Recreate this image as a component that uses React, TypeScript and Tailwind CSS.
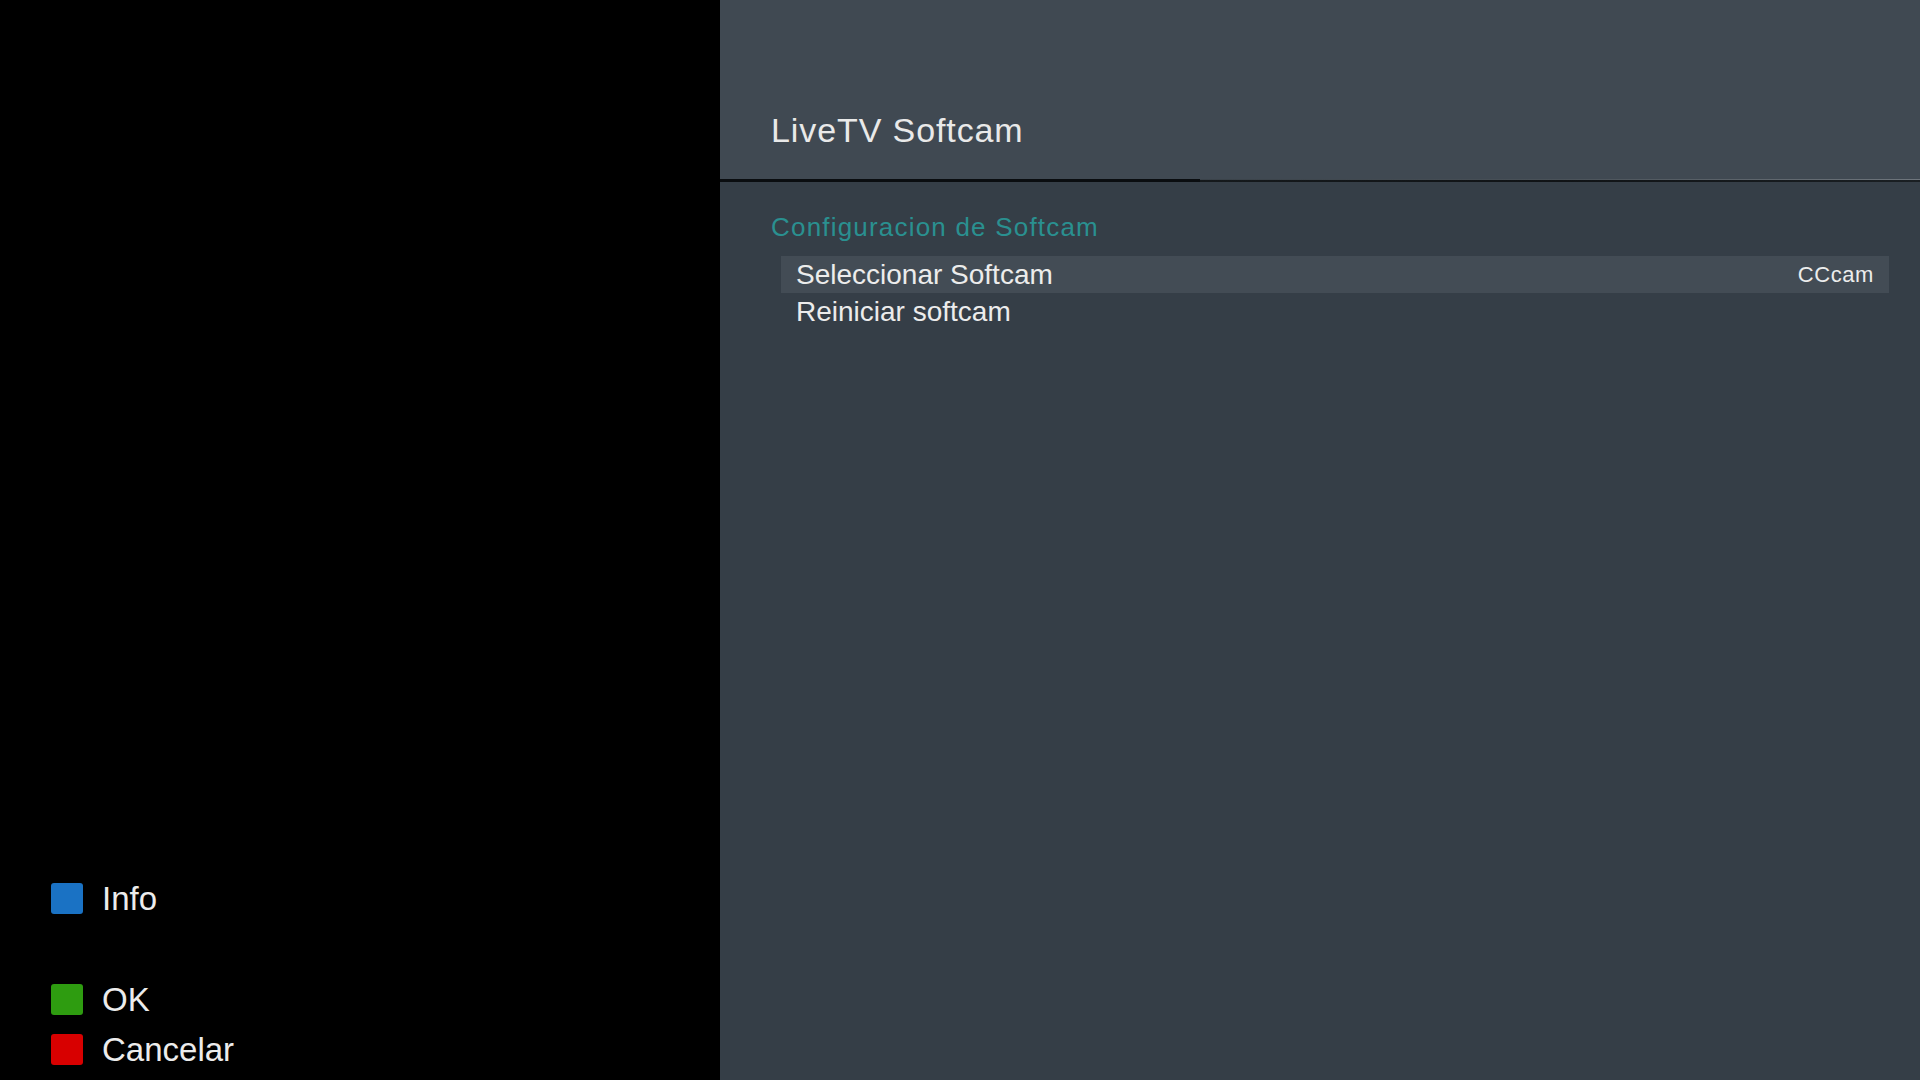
import React from "react"

const font = { fontFamily: '"Liberation Sans", Arial, sans-serif' }

type MenuRow = { label: string; value?: string; selected?: boolean }

const rows: MenuRow[] = [
  { label: "Seleccionar Softcam", value: "CCcam", selected: true },
  { label: "Reiniciar softcam" },
]

function ColorKey({ color, label }: { color: string; label: string }) {
  return (
    <div className="flex h-[50px] items-center">
      <div className={`h-[31px] w-[32px] rounded-[3px] ${color}`} />
      <span className="ml-[19px] text-[33px] leading-none text-[#ececec]">{label}</span>
    </div>
  )
}

export default function App() {
  return (
    <div className="flex h-[1080px] w-[1920px] overflow-hidden" style={font}>
      {/* left: key legend */}
      <div className="flex w-[720px] flex-col justify-end bg-black pb-[6px] pl-[51px]">
        <ColorKey color="bg-[#1a72c4]" label="Info" />
        <div className="h-[51px]" />
        <ColorKey color="bg-[#2e9c10]" label="OK" />
        <ColorKey color="bg-[#d80000]" label="Cancelar" />
      </div>

      {/* right: menu */}
      <div className="flex flex-1 flex-col bg-[#353e47]">
        <div className="h-[179px] bg-[#404952] pl-[51px] pt-[113px]">
          <h1 className="text-[34px] leading-none tracking-[0.9px] text-[#e9e9e9]">LiveTV Softcam</h1>
        </div>
        <div className="flex h-[3px]">
          <div className="h-full w-[480px] bg-[#0a0d10]" />
          <div className="flex h-full flex-1 flex-col">
            <div className="h-[1px] bg-gradient-to-r from-[#3a4249] via-[#4a5259] to-[#6f767d]" />
            <div className="h-[2px] bg-gradient-to-r from-[#15191c] via-[#101316] to-[#1a1f23]" />
          </div>
        </div>

        <div className="pl-[51px] pt-[32px]">
          <h2 className="text-[26px] leading-none tracking-[1.2px] text-[#2a9090]">Configuracion de Softcam</h2>
        </div>

        <div className="ml-[61px] mr-[31px] mt-[16px] flex flex-col">
          {rows.map((row) => (
            <div
              key={row.label}
              className={`flex h-[37px] items-center justify-between px-[15px] ${
                row.selected ? "bg-[#434c55]" : ""
              }`}
            >
              <span className="text-[28px] leading-none text-[#ececec]">{row.label}</span>
              {row.value && (
                <span className="text-[22px] leading-none tracking-[0.6px] text-[#ececec]">{row.value}</span>
              )}
            </div>
          ))}
        </div>
      </div>
    </div>
  )
}
